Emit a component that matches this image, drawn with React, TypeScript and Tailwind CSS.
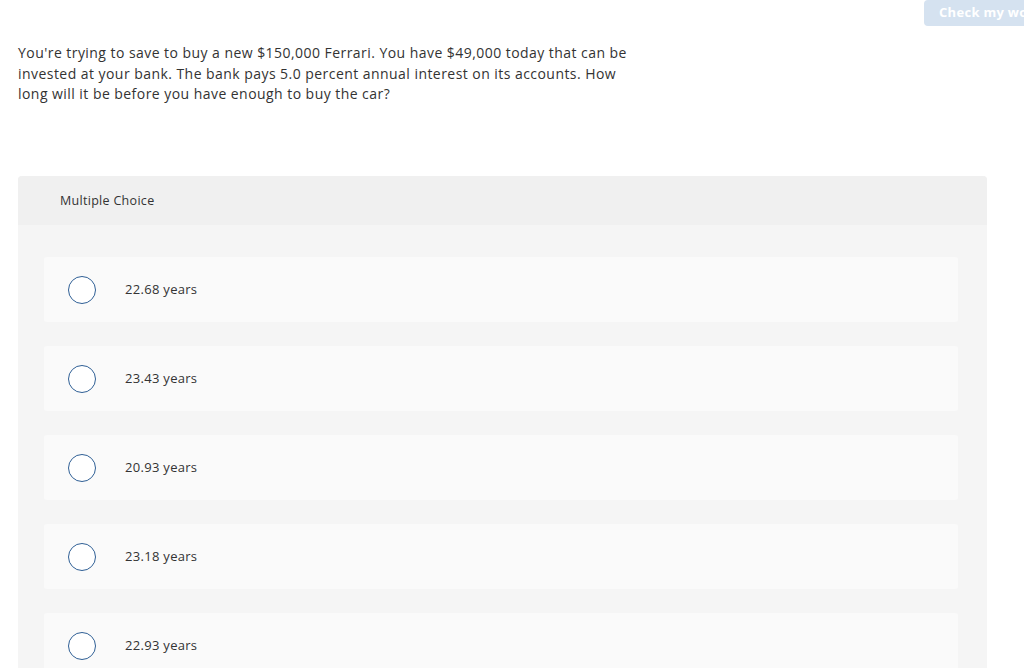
import React from "react";

const options = ["22.68 years", "23.43 years", "20.93 years", "23.18 years", "22.93 years"];

export default function App() {
  return (
    <div className="w-[1024px] h-[668px] overflow-hidden bg-white text-[#333]" style={{ fontFamily: '"Open Sans", "Noto Sans", sans-serif' }}>
      <div className="flex h-[27px]">
        <div className="ml-auto w-[100px] h-[26px] rounded-l-[4px] bg-[#d5e2f0] text-white font-bold text-[13px] tracking-[0.3px] pl-[15px] pt-[3px] whitespace-nowrap overflow-hidden">
          Check my work
        </div>
      </div>
      <p className="ml-[18px] mt-[16px] w-[625px] text-[14px] leading-[20.5px] tracking-[0.45px] text-[#333]">
        You're trying to save to buy a new $150,000 Ferrari. You have $49,000 today that can be invested at your bank. The bank pays 5.0 percent annual interest on its accounts. How long will it be before you have enough to buy the car?
      </p>
      <div className="ml-[18px] mt-[71px] w-[969px] rounded-t-[4px] overflow-hidden bg-[#f5f5f5]">
        <div className="h-[49px] bg-[#f0f0f0] flex items-center pl-[42px] pt-[2px] text-[12.5px] tracking-[0.3px] text-[#333]">Multiple Choice</div>
        <div className="flex flex-col gap-[24px] pt-[32px] pl-[26px] pr-[29px]">
          {options.map((o) => (
            <div key={o} className="h-[65px] rounded-[3px] bg-[#fafafa] flex items-center pt-[2px]">
              <div className="ml-[24px] w-[28px] h-[28px] rounded-full border-[1.5px] border-[#2f5f95] bg-white shrink-0" />
              <div className="ml-[29px] text-[13px] tracking-[0.3px] text-[#333]">{o}</div>
            </div>
          ))}
        </div>
      </div>
    </div>
  );
}
